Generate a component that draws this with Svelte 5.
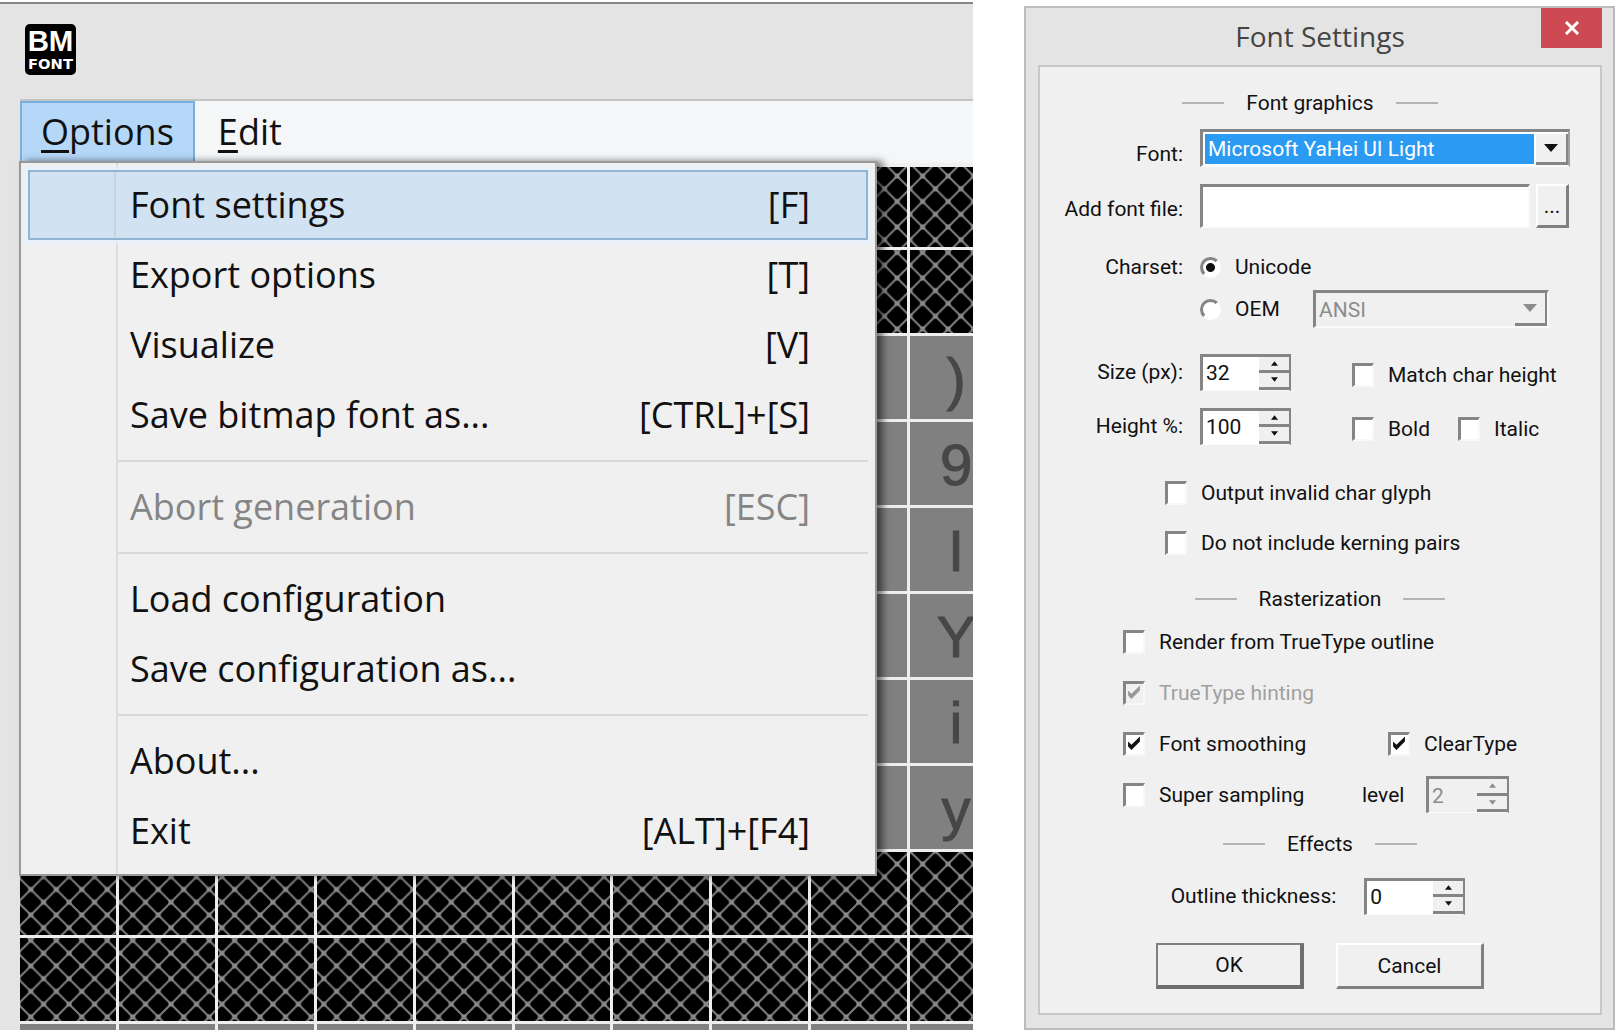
<script>
  const menu = [
    { label: 'Font settings', key: '[F]', active: true },
    { label: 'Export options', key: '[T]' },
    { label: 'Visualize', key: '[V]' },
    { label: 'Save bitmap font as...', key: '[CTRL]+[S]' },
    null,
    { label: 'Abort generation', key: '[ESC]', disabled: true },
    null,
    { label: 'Load configuration', key: '' },
    { label: 'Save configuration as...', key: '' },
    null,
    { label: 'About...', key: '' },
    { label: 'Exit', key: '[ALT]+[F4]' }
  ];

  // Last visible glyph of every filled row; empty strings are rows without glyphs.
  const rowGlyphs = ['', '', ')', '9', 'I', 'Y', 'i', 'y', '', '', ' '];
  const cells = rowGlyphs.flatMap((glyph) =>
    Array.from({ length: 10 }, (_, col) => ({ filled: glyph !== '', glyph: col === 9 ? glyph : '' }))
  );
</script>

{#snippet check(label, checked = false, disabled = false)}
  <label class="option" class:dim={disabled}>
    <span class="box">
      <input type="checkbox" {checked} {disabled} />
      <svg class="tick" viewBox="0 0 13 13" aria-hidden="true"><path d="M3 5v3l2 2 5-5V2L5 7z" /></svg>
    </span>
    {label}
  </label>
{/snippet}

{#snippet spinner(id, value, disabled = false)}
  <span class="sunken spinner" class:off={disabled}>
    <input {id} type="number" {value} {disabled} />
    <span class="arrows">
      <button type="button" aria-label="Increase" {disabled}><svg viewBox="0 0 8 5"><path d="M4 0l4 5H0z" /></svg></button>
      <button type="button" aria-label="Decrease" {disabled}><svg viewBox="0 0 8 5"><path d="M0 0h8L4 5z" /></svg></button>
    </span>
  </span>
{/snippet}

<main class="page">
  <section class="window" aria-label="Bitmap font generator">
    <header class="titlebar">
      <svg class="logo" viewBox="0 0 52 52" role="img" aria-label="BMFont">
        <rect width="52" height="52" rx="5" />
        <text class="big" x="26" y="28" font-size="30">BM</text>
        <text x="26" y="46" font-size="15">FONT</text>
      </svg>
    </header>
    <div class="client">
      <nav class="menubar">
        <button type="button" class="top open"><u>O</u>ptions</button>
        <button type="button" class="top"><u>E</u>dit</button>
        <div class="popup">
          {#each menu as item}
            {#if item}
              <button type="button" class="item" class:active={item.active} disabled={item.disabled}>
                <span>{item.label}</span><span>{item.key}</span>
              </button>
            {:else}
              <div class="rule"></div>
            {/if}
          {/each}
        </div>
      </nav>
      <div class="canvas">
        <svg class="hatch" aria-hidden="true">
          <defs>
            <pattern id="hatch" x="-1.9" y="-3.7" width="25.48" height="25.48" patternUnits="userSpaceOnUse">
              <path d="M-2 -2L27.48 27.48M-2 27.48L27.48 -2" stroke="#7d7d7d" stroke-width="2" />
              <path d="M10.2 10.2h5v5h-5zM-2 -2h4.5v4.5h-4.5zM23 -2h4.5v4.5h-4.5zM-2 23h4.5v4.5h-4.5zM23 23h4.5v4.5h-4.5z" fill="#8a8a8a" />
            </pattern>
          </defs>
          <rect width="100%" height="100%" fill="url(#hatch)" />
        </svg>
        <div class="cells">
          {#each cells as cell}
            <div class="cell" class:filled={cell.filled}>{cell.glyph}</div>
          {/each}
        </div>
      </div>
    </div>
  </section>

  <section class="dialog" aria-labelledby="dialog-title">
    <header class="caption">
      <h1 id="dialog-title">Font Settings</h1>
      <button type="button" class="close" aria-label="Close">
        <svg viewBox="0 0 16 14"><path d="M2 1l12 12M14 1L2 13" /></svg>
      </button>
    </header>
    <form class="panel" onsubmit={(e) => e.preventDefault()}>
      <h2 class="graphics">Font graphics</h2>

      <div class="row tall">
        <label class="name" for="font">Font:</label>
        <span class="sunken combo font">
          <select id="font"><option>Microsoft YaHei UI Light</option></select>
          <span class="drop"><svg viewBox="0 0 14 8"><path d="M0 0h14L7 8z" /></svg></span>
        </span>
      </div>
      <div class="row tall file-row">
        <label class="name" for="file">Add font file:</label>
        <input id="file" class="sunken file" type="text" />
        <button type="button" class="raised browse">...</button>
      </div>

      <div class="row charset">
        <span class="name">Charset:</span>
        <label class="option"><input type="radio" name="charset" checked />Unicode</label>
      </div>
      <div class="row charset">
        <span class="name"></span>
        <label class="option oem"><input type="radio" name="charset" />OEM</label>
        <span class="sunken combo ansi off">
          <select aria-label="OEM charset" disabled><option>ANSI</option></select>
          <span class="drop"><svg viewBox="0 0 14 8"><path d="M0 0h14L7 8z" /></svg></span>
        </span>
      </div>

      <div class="row size first">
        <label class="name" for="size">Size (px):</label>
        {@render spinner('size', 32)}
        <div class="side">{@render check('Match char height')}</div>
      </div>
      <div class="row size">
        <label class="name" for="height">Height %:</label>
        {@render spinner('height', 100)}
        <div class="side">{@render check('Bold')}{@render check('Italic')}</div>
      </div>

      <div class="output">
        {@render check('Output invalid char glyph')}
        {@render check('Do not include kerning pairs')}
      </div>

      <h2 class="raster">Rasterization</h2>

      <div class="rows">
        <div class="row">{@render check('Render from TrueType outline')}</div>
        <div class="row">{@render check('TrueType hinting', true, true)}</div>
        <div class="row">
          <div class="left">{@render check('Font smoothing', true)}</div>
          <div class="clear">{@render check('ClearType', true)}</div>
        </div>
        <div class="row">
          <div class="left">{@render check('Super sampling')}</div>
          <label class="level" for="level">level</label>
          {@render spinner('level', 2, true)}
        </div>
      </div>

      <h2 class="effects">Effects</h2>

      <div class="row outline">
        <label for="outline">Outline thickness:</label>
        {@render spinner('outline', 0)}
      </div>

      <div class="buttons">
        <button type="submit" class="raised default">OK</button>
        <button type="button" class="raised">Cancel</button>
      </div>
    </form>
  </section>
</main>

<style>
  :global(body) {
    background: #fff;
  }

  .page,
  .page * {
    box-sizing: border-box;
  }

  button,
  input,
  select {
    margin: 0;
    padding: 0;
    border: 0;
    border-radius: 0;
    background: none;
    color: inherit;
    font: inherit;
  }

  .page {
    display: grid;
    grid-template-columns: minmax(0, 973fr) minmax(0, 591fr);
    gap: 51px;
    min-height: 100vh;
    padding: 2px 1px 2px 0;
    color: #111;
  }

  /* Main window */
  .window {
    display: flex;
    flex-direction: column;
    border-top: 2px solid #858585;
    background: #e4e4e4;
    font-family: 'Open Sans', 'Noto Sans', sans-serif;
    font-size: 36px;
  }

  .titlebar {
    height: 95px;
    padding: 20px 25px;
  }

  .logo {
    display: block;
    width: 51px;
    height: 51px;
  }

  .logo text {
    fill: #fff;
    font-family: 'DejaVu Sans', sans-serif;
    font-weight: 700;
    text-anchor: middle;
  }

  .logo .big {
    font-family: 'Liberation Sans', Arial, sans-serif;
  }

  .client {
    display: flex;
    flex: 1;
    flex-direction: column;
    margin-left: 20px;
    border-top: 2px solid #c4c4c4;
  }

  .menubar {
    position: relative;
    z-index: 1;
    display: flex;
    height: 66px;
    border-bottom: 4px solid #f0f0f0;
    background: #f5f6f8;
  }

  .top {
    padding: 0 23px;
    line-height: 60px;
  }

  .top.open {
    padding: 0 19px;
    border: 2px solid #7aaedb;
    background: #b5d7f8;
    line-height: 56px;
  }

  .top u {
    text-decoration-thickness: 3px;
    text-underline-offset: 5px;
  }

  .popup {
    position: absolute;
    top: 60px;
    left: -1px;
    width: 858px;
    padding: 7px 7px 8px;
    border: 2px solid #999;
    background: linear-gradient(#dcdcdc, #dcdcdc) 95px 0 / 2px 100% no-repeat #f0f0f0;
    box-shadow: 6px 0 7px rgba(0, 0, 0, 0.5);
  }

  .item {
    display: flex;
    justify-content: space-between;
    width: 100%;
    height: 70px;
    padding: 0 56px 0 100px;
    border: 2px solid transparent;
    line-height: 66px;
    text-align: left;
  }

  .item.active {
    border-color: #93b4d2;
    background: linear-gradient(#bcbcbc66, #bcbcbc66) 84px 0 / 2px 100% no-repeat #d1e2f2;
    box-shadow: 0 0 3px 3px #e6f2fc;
  }

  .item:disabled {
    color: #858585;
  }

  .rule {
    height: 22px;
    margin-left: 90px;
    background: linear-gradient(#d9d9d9, #d9d9d9) 0 10px / 100% 2px no-repeat;
  }

  .canvas {
    position: relative;
    flex: 1;
    overflow: hidden;
    background: #000;
  }

  .hatch {
    position: absolute;
    width: 100%;
    height: 100%;
  }

  .cells {
    position: relative;
    display: grid;
    grid-template-columns: repeat(10, minmax(0, 1fr));
    grid-template-rows: 83px repeat(9, 86px) minmax(6px, 1fr);
    height: 100%;
    margin-right: -36px;
  }

  .cell {
    padding-right: 4px;
    border: solid #eee;
    border-width: 0 3px 3px 0;
    color: #474747;
    font-family: 'Liberation Sans', Arial, sans-serif;
    font-size: 58px;
    line-height: 86px;
    text-align: center;
    -webkit-text-stroke: 1px #474747;
  }

  .cell.filled {
    background: #808080;
  }

  .cell:nth-last-child(-n + 10) {
    border-bottom: 0;
    line-height: 6px;
  }

  /* Dialog */
  .dialog {
    display: flex;
    flex-direction: column;
    margin-top: 4px;
    padding: 0 11px 13px 12px;
    border: 2px solid #bcbcbc;
    background: #e4e4e4;
    font-family: Roboto, 'Liberation Sans', sans-serif;
    font-size: 21px;
    line-height: 26px;
  }

  .caption {
    position: relative;
    height: 57px;
  }

  h1 {
    margin: 0;
    color: #444;
    font: 28px/57px 'Open Sans', 'Noto Sans', sans-serif;
    text-align: center;
  }

  .close {
    position: absolute;
    top: 0;
    right: 0;
    display: flex;
    align-items: center;
    justify-content: center;
    width: 61px;
    height: 40px;
    background: #cd4a53;
  }

  .close svg {
    width: 16px;
    height: 14px;
    fill: none;
    stroke: #fff;
    stroke-width: 3;
  }

  .panel {
    flex: 1;
    border: 2px solid #c8c8c8;
    background: #f0f0f0;
  }

  h2 {
    display: flex;
    align-items: center;
    justify-content: center;
    gap: 22px;
    margin: 0;
    height: 52px;
    font: inherit;
  }

  h2::before,
  h2::after {
    width: 42px;
    height: 2px;
    background: #b4b4b4;
    content: '';
  }

  h2.graphics {
    margin-top: 10px;
    padding-right: 20px;
  }

  .row {
    display: flex;
    align-items: center;
  }

  .name {
    width: 143px;
    margin-right: 17px;
    text-align: right;
  }

  .tall {
    align-items: flex-start;
    height: 55px;
  }

  .tall .name {
    line-height: 50px;
  }

  .sunken {
    border: 2px solid #fafafa;
    border-top: 3px solid #858585;
    border-left: 3px solid #858585;
    background: #fff;
  }

  .raised {
    border: 2px solid #fff;
    border-right: 3px solid #808080;
    border-bottom: 3px solid #808080;
    background: #f0f0f0;
  }

  .off,
  .off .drop {
    background: #f0f0f0;
    color: #8c8c8c;
  }

  .combo {
    display: flex;
    height: 38px;
  }

  .combo.font {
    width: 370px;
    padding: 2px 0 0 2px;
    border-right-color: #a0a0a0;
  }

  .combo select {
    flex: 1;
    min-width: 0;
    appearance: none;
    padding-left: 3px;
    opacity: 1;
    outline: 0;
  }

  .combo.font select {
    height: 30px;
    margin-right: 2px;
    background: #2b9af3;
    color: #fff;
  }

  .drop {
    display: flex;
    align-items: center;
    justify-content: center;
    width: 32px;
    border-right: 2px solid #858585;
    border-bottom: 3px solid #858585;
    background: #f0f0f0;
  }

  .drop svg {
    width: 14px;
    height: 8px;
    fill: currentColor;
  }

  .combo.ansi {
    width: 236px;
  }

  .file {
    width: 330px;
    height: 44px;
  }

  .browse {
    width: 33px;
    height: 44px;
    margin-left: 6px;
  }

  .file-row {
    height: 62px;
  }

  .charset {
    height: 42px;
  }

  .option {
    display: flex;
    align-items: center;
    gap: 14px;
    white-space: nowrap;
  }

  .option.oem {
    width: 113px;
  }

  .option input {
    flex: none;
    appearance: none;
    background: #fff;
  }

  .option input[type='radio'] {
    width: 21px;
    height: 21px;
    border: 3px solid #fff;
    border-top-color: #858585;
    border-left-color: #858585;
    border-radius: 50%;
  }

  .option input[type='radio']:checked {
    background: radial-gradient(circle, #111 4px, #fff 5px);
  }

  .box {
    display: grid;
    width: 22px;
    height: 24px;
  }

  .box > * {
    grid-area: 1 / 1;
  }

  .box input {
    width: 22px;
    height: 24px;
    border: 2px solid #f8f8f8;
    border-top: 3px solid #858585;
    border-left: 3px solid #858585;
  }

  .tick {
    visibility: hidden;
    z-index: 1;
    width: 22px;
    height: 24px;
    fill: #111;
    pointer-events: none;
  }

  .box input:checked + .tick {
    visibility: visible;
  }

  .dim {
    color: #a0a0a0;
  }

  .dim .box input {
    background: #f0f0f0;
  }

  .dim .tick {
    fill: #999;
  }

  .spinner {
    display: flex;
    width: 91px;
    height: 37px;
    border-right: 2px solid #858585;
    border-bottom-width: 1px;
  }

  .spinner input {
    flex: 1;
    min-width: 0;
    padding-left: 3px;
    appearance: textfield;
  }

  .spinner input::-webkit-inner-spin-button {
    appearance: none;
  }

  .arrows {
    display: flex;
    flex-direction: column;
    width: 30px;
  }

  .arrows button {
    display: flex;
    flex: 1;
    align-items: center;
    justify-content: center;
    border-bottom: 3px solid #858585;
    background: #f0f0f0;
  }

  .arrows svg {
    width: 7px;
    height: 5px;
    fill: currentColor;
  }

  .row.size {
    height: 54px;
  }

  .row.size.first {
    margin-top: 15px;
  }

  .side {
    display: flex;
    gap: 28px;
    margin-left: 61px;
    padding-top: 6px;
  }

  .output {
    display: flex;
    flex-direction: column;
    gap: 24px;
    margin: 27px 0 18px 125px;
  }

  h2.raster {
    height: 50px;
  }

  .rows {
    padding-left: 83px;
  }

  .rows .row {
    height: 51px;
  }

  .rows .row:first-child {
    height: 36px;
    margin-bottom: 7px;
  }

  .left {
    width: 239px;
  }

  .clear {
    margin-left: 26px;
  }

  .level {
    width: 64px;
  }

  .rows .spinner {
    width: 83px;
  }

  h2.effects {
    height: 48px;
  }

  .outline {
    gap: 28px;
    justify-content: center;
    height: 56px;
    padding-right: 4px;
  }

  .outline .spinner {
    width: 101px;
  }

  .buttons {
    display: flex;
    gap: 32px;
    justify-content: center;
    margin-top: 19px;
  }

  .buttons button {
    width: 148px;
    height: 46px;
  }

  .buttons .default {
    border: 2px solid #808080;
    border-right: 4px solid #6e6e6e;
    border-bottom: 4px solid #6e6e6e;
  }
</style>
